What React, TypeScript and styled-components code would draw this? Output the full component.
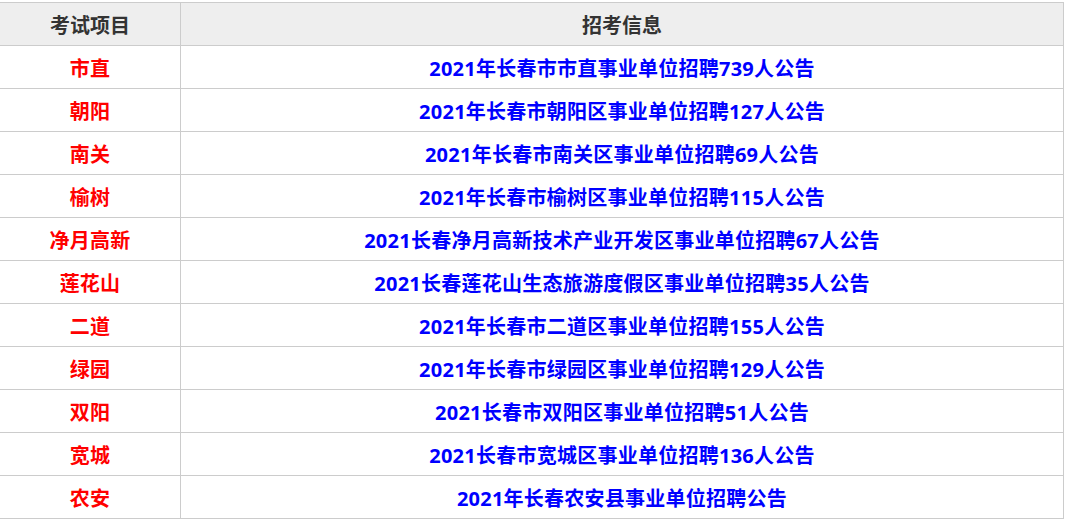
import React from "react";
import styled, { createGlobalStyle } from "styled-components";

const GlobalStyle = createGlobalStyle`
  html, body {
    margin: 0;
    padding: 0;
    background: #fff;
  }
  body {
    font-family: "Open Sans", "Noto Sans CJK SC", sans-serif;
  }
`;

interface Row {
  area: string;
  title: string;
}

const rows: Row[] = [
  { area: "市直", title: "2021年长春市市直事业单位招聘739人公告" },
  { area: "朝阳", title: "2021年长春市朝阳区事业单位招聘127人公告" },
  { area: "南关", title: "2021年长春市南关区事业单位招聘69人公告" },
  { area: "榆树", title: "2021年长春市榆树区事业单位招聘115人公告" },
  { area: "净月高新", title: "2021长春净月高新技术产业开发区事业单位招聘67人公告" },
  { area: "莲花山", title: "2021长春莲花山生态旅游度假区事业单位招聘35人公告" },
  { area: "二道", title: "2021年长春市二道区事业单位招聘155人公告" },
  { area: "绿园", title: "2021年长春市绿园区事业单位招聘129人公告" },
  { area: "双阳", title: "2021长春市双阳区事业单位招聘51人公告" },
  { area: "宽城", title: "2021长春市宽城区事业单位招聘136人公告" },
  { area: "农安", title: "2021年长春农安县事业单位招聘公告" },
];

export default function App() {
  return (
    <>
      <GlobalStyle />
      <Table>
        <colgroup>
          <col style={{ width: 181 }} />
          <col />
        </colgroup>
        <thead>
          <tr>
            <HeadCell>考试项目</HeadCell>
            <HeadCell>招考信息</HeadCell>
          </tr>
        </thead>
        <tbody>
          {rows.map((r) => (
            <tr key={r.area}>
              <Cell>
                <Area>{r.area}</Area>
              </Cell>
              <Cell>
                <Link href="#">{r.title}</Link>
              </Cell>
            </tr>
          ))}
        </tbody>
      </Table>
    </>
  );
}

const Table = styled.table`
  border-collapse: collapse;
  table-layout: fixed;
  width: 1065px;
  margin: 2px 0 0 -1px;
`;

const HeadCell = styled.th`
  height: 42px;
  padding: 0;
  border: 1px solid #cccccc;
  background: #eeeeee;
  color: #333333;
  font-size: 20px;
  font-weight: bold;
  text-align: center;
  vertical-align: middle;
`;

const Cell = styled.td`
  height: 42px;
  padding: 0;
  border: 1px solid #cccccc;
  text-align: center;
  vertical-align: middle;
  font-size: 20px;
  font-weight: bold;
  letter-spacing: 0.25px;
`;

const Area = styled.span`
  color: #ff0000;
`;

const Link = styled.a`
  color: #0000ff;
  text-decoration: none;
`;
